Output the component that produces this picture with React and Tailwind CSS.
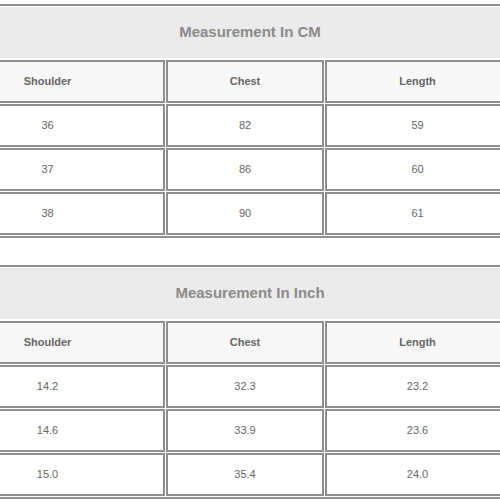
import React from "react";

const tables = [
  {
    title: "Measurement In CM",
    rows: [
      ["36", "82", "59"],
      ["37", "86", "60"],
      ["38", "90", "61"],
    ],
  },
  {
    title: "Measurement In Inch",
    rows: [
      ["14.2", "32.3", "23.2"],
      ["14.6", "33.9", "23.6"],
      ["15.0", "35.4", "24.0"],
    ],
  },
];

function SizeTable({ title, rows }) {
  return (
    <div className="border-t-2 border-b-2 border-[#8f8f8f] pt-[1px]">
      <div className="h-[51px] bg-[#ebebeb] flex items-center justify-center text-[15px] font-bold text-[#8a8a8a]">
        {title}
      </div>
      <div className="pt-[2px] pb-[1px] ml-[-70px] w-[579px]">
        <div className="grid grid-cols-[235px_158px_185px] gap-[1px]">
          {["Shoulder", "Chest", "Length"].map((h) => (
            <div
              key={h}
              className="h-[43px] border-2 border-[#8f8f8f] bg-[#f7f7f7] flex items-center justify-center text-[11px] font-bold text-[#666]"
            >
              {h}
            </div>
          ))}
          {rows.map((r, i) =>
            r.map((c, j) => (
              <div
                key={i + "-" + j}
                className="h-[43px] border-2 border-[#8f8f8f] bg-white flex items-center justify-center text-[11px] text-[#666]"
              >
                {c}
              </div>
            ))
          )}
        </div>
      </div>
    </div>
  );
}

export default function App() {
  return (
    <div className="w-[500px] h-[500px] overflow-hidden bg-white font-['Liberation_Sans',Arial,sans-serif]">
      <div className="pt-[4px] flex flex-col gap-[27px]">
        {tables.map((t) => (
          <SizeTable key={t.title} {...t} />
        ))}
      </div>
    </div>
  );
}
